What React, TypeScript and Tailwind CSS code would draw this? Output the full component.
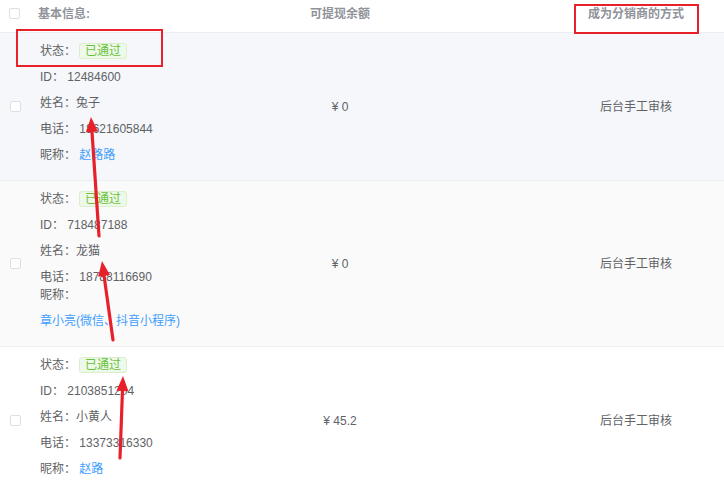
import React from "react";

type Row = {
  id: string;
  name: string;
  phone: string;
  nick: string;
  nickBlock?: boolean;
  balance: string;
  bg: string;
};

const rows: Row[] = [
  { id: "12484600", name: "兔子", phone: "18621605844", nick: "赵路路", balance: "¥ 0", bg: "bg-[#f5f7fa]" },
  { id: "718487188", name: "龙猫", phone: "18788116690", nick: "章小亮(微信、抖音小程序)", nickBlock: true, balance: "¥ 0", bg: "bg-[#fafafa]" },
  { id: "2103851204", name: "小黄人", phone: "13373316330", nick: "赵路", balance: "¥ 45.2", bg: "bg-white" },
];

function Checkbox() {
  return <span className="block w-[11px] h-[11px] border border-[#dcdfe6] bg-white rounded-[2px]" />;
}

function Arrow({ x1, y1, x2, y2 }: { x1: number; y1: number; x2: number; y2: number }) {
  // line from tail (x1,y1) to head (x2,y2)
  const dx = x2 - x1;
  const dy = y2 - y1;
  const len = Math.hypot(dx, dy);
  const ux = dx / len;
  const uy = dy / len;
  const hl = 15;
  const hw = 6;
  const bx = x2 - ux * hl;
  const by = y2 - uy * hl;
  const pts = `${x2},${y2} ${bx - uy * hw},${by + ux * hw} ${bx + uy * hw},${by - ux * hw}`;
  return (
    <g>
      <line x1={x1} y1={y1} x2={bx + ux * 2} y2={by + uy * 2} stroke="#e8202a" strokeWidth={3.2} strokeLinecap="round" />
      <polygon points={pts} fill="#e8202a" />
    </g>
  );
}

export default function App() {
  return (
    <div className="relative w-[724px] h-[490px] overflow-hidden bg-white text-[12px] text-[#606266] font-['Liberation_Sans','Noto_Sans_CJK_SC',sans-serif]">
      {/* Header */}
      <div className="flex h-[33px] border-b border-[#ebeef5] font-bold text-[#909399] leading-[18px]">
        <div className="w-[28px] pl-[9px] pt-[8px]">
          <Checkbox />
        </div>
        <div className="w-[202px] pl-[10px] pt-[5px]">基本信息:</div>
        <div className="w-[220px] pt-[5px] text-center">可提现余额</div>
        <div className="w-[98px]" />
        <div className="w-[176px] pt-[5px] text-center">成为分销商的方式</div>
      </div>

      {/* Rows */}
      {rows.map((r) => (
        <div key={r.id} className={`flex border-b border-[#ebeef5] ${r.bg}`}>
          <div className="w-[28px] pl-[10px] flex items-center">
            <Checkbox />
          </div>
          <div className="w-[202px] pl-[12px] pt-[9px] pb-[16px] flex flex-col gap-2 leading-[18px]">
            <div className="flex items-center">
              <span>状态：</span>
              <span className="ml-[3px] h-[16px] px-[5px] leading-[14px] border border-[#d9f0cb] bg-[#eff9e9] text-[#67c23a] rounded-[3px]">
                已通过
              </span>
            </div>
            <div>ID： {r.id}</div>
            <div>姓名：{r.name}</div>
            {r.nickBlock ? (
              <div>
                <div>电话： {r.phone}</div>
                <div>昵称：</div>
                <div className="mt-2 text-[#409eff]">{r.nick}</div>
              </div>
            ) : (
              <>
                <div>电话： {r.phone}</div>
                <div>
                  昵称： <span className="text-[#409eff]">{r.nick}</span>
                </div>
              </>
            )}
          </div>
          <div className="w-[220px] flex items-center justify-center">{r.balance}</div>
          <div className="w-[98px]" />
          <div className="w-[176px] flex items-center justify-center">后台手工审核</div>
        </div>
      ))}

      {/* Annotations */}
      <div className="absolute left-[16px] top-[29px] w-[147px] h-[38px] border-2 border-[#e8202a]" />
      <div className="absolute left-[574px] top-[4px] w-[125px] h-[30px] border-2 border-[#e8202a]" />
      <svg className="absolute left-0 top-0" width={724} height={490}>
        <Arrow x1={99} y1={236} x2={91} y2={117} />
        <Arrow x1={113} y1={340} x2={102} y2={261} />
        <Arrow x1={120} y1={458} x2={123} y2={376} />
      </svg>
    </div>
  );
}
